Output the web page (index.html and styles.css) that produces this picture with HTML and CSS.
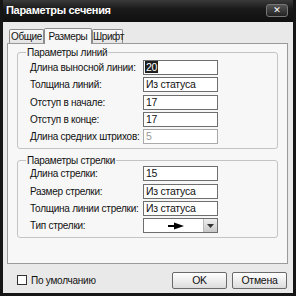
FILE: index.html
```html
<!DOCTYPE html>
<html lang="ru">
<head>
    <meta charset="UTF-8">
    <title>Параметры сечения</title>
    <link rel="stylesheet" href="styles.css">
</head>
<body>
    <div class="window">
        <div class="titlebar">
            <span class="title">Параметры сечения</span>
            <span class="close">✕</span>
        </div>
        <div class="client">
            <div class="tabs">
                <div class="tab tab-general">Общие</div>
                <div class="tab tab-sizes active">Размеры</div>
                <div class="tab tab-font">Шрифт</div>
            </div>
            <div class="panel">
                <fieldset class="group">
                    <legend>Параметры линий</legend>
                    <div class="row">
                        <label>Длина выносной линии:</label>
                        <div class="field"><span class="selected">20</span></div>
                    </div>
                    <div class="row">
                        <label>Толщина линий:</label>
                        <div class="field">Из статуса</div>
                    </div>
                    <div class="row">
                        <label>Отступ в начале:</label>
                        <div class="field">17</div>
                    </div>
                    <div class="row">
                        <label>Отступ в конце:</label>
                        <div class="field">17</div>
                    </div>
                    <div class="row">
                        <label>Длина средних штрихов:</label>
                        <div class="field disabled">5</div>
                    </div>
                </fieldset>
                <fieldset class="group group-arrow">
                    <legend>Параметры стрелки</legend>
                    <div class="row">
                        <label>Длина стрелки:</label>
                        <div class="field">15</div>
                    </div>
                    <div class="row">
                        <label>Размер стрелки:</label>
                        <div class="field">Из статуса</div>
                    </div>
                    <div class="row">
                        <label>Толщина линии стрелки:</label>
                        <div class="field">Из статуса</div>
                    </div>
                    <div class="row">
                        <label>Тип стрелки:</label>
                        <div class="field combo">
                            <div class="combo-value">
                                <svg width="16" height="8" viewBox="0 0 16 8">
                                    <line x1="0" y1="4" x2="9" y2="4" stroke="#000" stroke-width="2"/>
                                    <polygon points="6,0.5 16,4 6,7.5" fill="#000"/>
                                </svg>
                            </div>
                            <div class="combo-button">
                                <svg width="7" height="4" viewBox="0 0 7 4"><polygon points="0,0 7,0 3.5,4" fill="#333"/></svg>
                            </div>
                        </div>
                    </div>
                </fieldset>
            </div>
            <div class="footer">
                <label class="check"><span class="box"></span>По умолчанию</label>
                <div class="buttons">
                    <button class="btn">OK</button>
                    <button class="btn">Отмена</button>
                </div>
            </div>
        </div>
    </div>
</body>
</html>
```

FILE: styles.css
```css
body {
    margin: 0;
    font-family: "Liberation Sans", Arial, sans-serif;
    font-size: 10px;
    letter-spacing: -0.25px;
    color: #111;
    white-space: nowrap;
}
.window {
    width: 296px;
    height: 296px;
    box-sizing: border-box;
    background: #151515;
    padding: 0 3px 3px 3px;
    display: flex;
    flex-direction: column;
}
.titlebar {
    height: 22px;
    display: flex;
    align-items: center;
    justify-content: space-between;
    padding: 0 5px 0 3px;
    background: linear-gradient(to bottom, #3a3a3a 0%, #1a1a1a 40%, #101010 100%);
}
.title {
    color: #fff;
    font-weight: bold;
    font-size: 11px;
    letter-spacing: -0.3px;
    margin-bottom: 2px;
}
.close {
    width: 20px;
    height: 11px;
    margin-bottom: 2px;
    border: 1px solid #777;
    border-radius: 3px;
    background: linear-gradient(to bottom, #555, #222);
    color: #fff;
    font-family: "DejaVu Sans", sans-serif;
    font-size: 9px;
    font-weight: bold;
    line-height: 11px;
    text-align: center;
}
.client {
    flex: 1;
    background: #e9e9e9;
    padding: 5px 5px 0 4px;
    display: flex;
    flex-direction: column;
}
.tabs {
    display: flex;
    padding-left: 2px;
    height: 16px;
    align-items: flex-end;
}
.tab {
    height: 13px;
    line-height: 13px;
    text-align: center;
    letter-spacing: -0.4px;
    border: 1px solid #8c8c8c;
    border-bottom: none;
    border-radius: 2px 2px 0 0;
    background: linear-gradient(to bottom, #fafafa, #e4e4e4);
}
.tab-general {
    width: 33px;
}
.tab-sizes {
    width: 46px;
}
.tab-font {
    width: 29px;
}
.tab.active {
    height: 15px;
    line-height: 15px;
    background: #f7f7f7;
    margin-bottom: -1px;
    position: relative;
    z-index: 1;
}
.panel {
    height: 221px;
    box-sizing: border-box;
    border: 1px solid #9a9a9a;
    background: #f7f7f7;
    padding: 2px 9px 0 9px;
    display: flex;
    flex-direction: column;
    gap: 5px;
}
.group {
    margin: 0;
    border: 1px solid #c4c4c4;
    border-radius: 3px;
    padding: 0 0 3px 12px;
}
.group legend {
    padding: 0 1px;
    margin-left: -4px;
    line-height: 13px;
}
.group-arrow .row:first-of-type {
    margin-top: -2px;
}
.row {
    display: flex;
    align-items: center;
    height: 17.25px;
}
.row label {
    width: 113px;
    flex-shrink: 0;
}
.field {
    width: 75px;
    height: 15px;
    box-sizing: border-box;
    border: 1px solid #6e6e6e;
    background: #fff;
    padding: 0 2px;
    line-height: 13px;
    font-size: 10.5px;
}
.field.disabled {
    color: #9a9a9a;
    border-color: #aaa;
}
.selected {
    background: #1e1e1e;
    color: #fff;
    padding: 0 1px;
    margin-left: -1px;
}
.combo {
    display: flex;
    padding: 0;
}
.combo-value {
    flex: 1;
    display: flex;
    align-items: center;
    justify-content: center;
    padding-left: 4px;
}
.combo-button {
    width: 13px;
    display: flex;
    align-items: center;
    justify-content: center;
    border-left: 1px solid #bbb;
    background: linear-gradient(to bottom, #eee, #c8c8c8);
}
.footer {
    flex: 1;
    display: flex;
    align-items: center;
    justify-content: space-between;
    padding: 3px 1px 0 10px;
}
.check {
    display: flex;
    align-items: center;
    gap: 4px;
}
.box {
    width: 8px;
    height: 8px;
    border: 1px solid #333;
    background: #fff;
}
.buttons {
    display: flex;
    gap: 5px;
}
.btn {
    width: 55px;
    height: 17px;
    padding: 0;
    font-family: inherit;
    font-size: 10.5px;
    letter-spacing: -0.25px;
    color: #111;
    border: 1px solid #6a6a6a;
    border-radius: 2px;
    background: linear-gradient(to bottom, #ffffff, #dcdcdc);
}
```
